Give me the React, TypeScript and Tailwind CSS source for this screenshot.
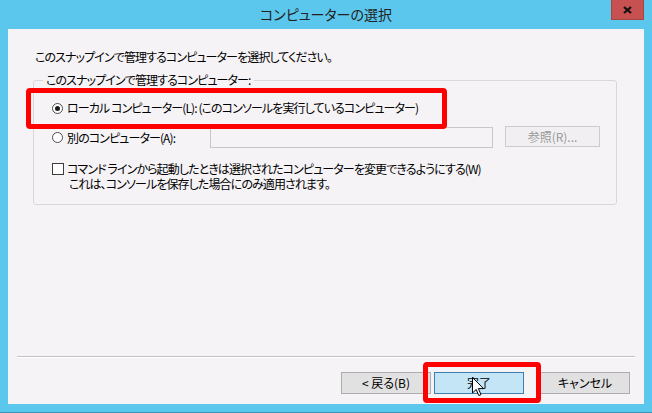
const FONT = "font-['Noto_Sans_CJK_JP','Noto_Sans_CJK_SC',sans-serif] [font-feature-settings:'palt']"

function Radio({ checked }: { checked?: boolean }) {
  return (
    <span className="flex h-[11px] w-[11px] shrink-0 items-center justify-center rounded-full border border-[#4d4d4d] bg-white">
      {checked && <span className="h-[5px] w-[5px] rounded-full bg-[#1a1a1a]" />}
    </span>
  )
}

function Btn({ label, primary }: { label: string; primary?: boolean }) {
  return (
    <button
      type="button"
      className={`flex h-[22px] w-[90px] items-center justify-center border text-[12px] leading-none text-black ${
        primary ? 'border-[#3c7fb1] bg-[#c4e5f6]' : 'border-[#adadad] bg-[#e1e1e1]'
      }`}
    >
      {label}
    </button>
  )
}

function Cursor() {
  return (
    <svg width="13" height="20" viewBox="0 0 13 20" className="block">
      <path
        d="M0.5 0.5 L0.5 16 L4.2 12.4 L6.8 18.5 L9 17.6 L6.4 11.6 L11.5 11.6 Z"
        fill="white"
        stroke="black"
        strokeWidth="1"
      />
    </svg>
  )
}

export default function App() {
  return (
    <div className={`relative flex h-[413px] w-[652px] flex-col bg-[#5cc7ec] ${FONT}`}>
      {/* title bar */}
      <div className="relative flex h-[29px] shrink-0 items-center justify-center">
        <span className="text-[14px] text-[#222]">コンピューターの選択</span>
        <div className="absolute right-[8px] top-0 flex h-[20px] w-[33px] items-center justify-center border border-t-0 border-[#a84542] bg-[#c75050]">
          <svg width="9" height="8" viewBox="0 0 9 8">
            <path d="M1 1 L8 7 M8 1 L1 7" stroke="#111" strokeWidth="2.2" />
          </svg>
        </div>
      </div>

      {/* client area */}
      <div className="mx-[8px] flex h-[375px] flex-col bg-[#f5f3f6] text-[12px] tracking-[-0.9px] text-black">
        <p className="pl-[27px] pt-[20px] leading-[16px]">
          このスナップインで管理するコンピューターを選択してください。
        </p>

        <fieldset className="ml-[25px] mt-[7px] h-[133px] w-[584px] rounded-[3px] border border-[#d9d7da] pb-[13px] pl-[18px]">
          <legend className="-ml-[9px] px-[3px] leading-[16px]">このスナップインで管理するコンピューター:</legend>

          <div className="mt-[12px] flex h-[16px] items-center gap-[4px]">
            <Radio checked />
            <span className="leading-[16px]">ローカル コンピューター(L): (このコンソールを実行しているコンピューター)</span>
          </div>

          <div className="mt-[11px] flex h-[21px] items-center">
            <div className="flex w-[158px] items-center gap-[4px]">
              <Radio />
              <span>別のコンピューター(A):</span>
            </div>
            <div className="h-[21px] w-[283px] border border-[#c9c7ca] bg-[#f5f3f6]" />
            <div className="ml-[12px] flex h-[21px] w-[95px] -translate-y-[1px] items-center justify-center border border-[#cdcbce] bg-[#f1eff2] tracking-normal text-[#9a9a9a]">
              参照(R)...
            </div>
          </div>

          <div className="mt-[13px] flex items-start gap-[3px]">
            <span className="mt-[2px] h-[12px] w-[12px] shrink-0 border border-[#3c3c3c] bg-white" />
            <div className="leading-[15px]">
              <div>コマンド ラインから起動したときは選択されたコンピューターを変更できるようにする(W)</div>
              <div className="pl-[2px]">これは、コンソールを保存した場合にのみ適用されます。</div>
            </div>
          </div>
        </fieldset>

        <div className="flex-1" />
        <div className="mx-[9px] h-[2px] border-t border-[#c4c2c5] bg-white" />
        <div className="mb-[10px] mt-[14px] flex justify-end pr-[14px] tracking-normal">
          <Btn label="< 戻る(B)" />
          <div className="ml-[3px]">
            <Btn label="完了" primary />
          </div>
          <div className="ml-[16px]">
            <Btn label="キャンセル" />
          </div>
        </div>
      </div>
      <div className="flex-1 border-b border-[#3d93b8]" />

      {/* highlight boxes */}
      <div className="absolute left-[26px] top-[88px] h-[41px] w-[421px] rounded-[4px] border-[5px] border-[#f00]" />
      <div className="absolute left-[423px] top-[362px] h-[41px] w-[118px] rounded-[4px] border-[5px] border-[#f00]" />

      {/* mouse pointer */}
      <div className="absolute left-[472px] top-[377px]">
        <Cursor />
      </div>
    </div>
  )
}
